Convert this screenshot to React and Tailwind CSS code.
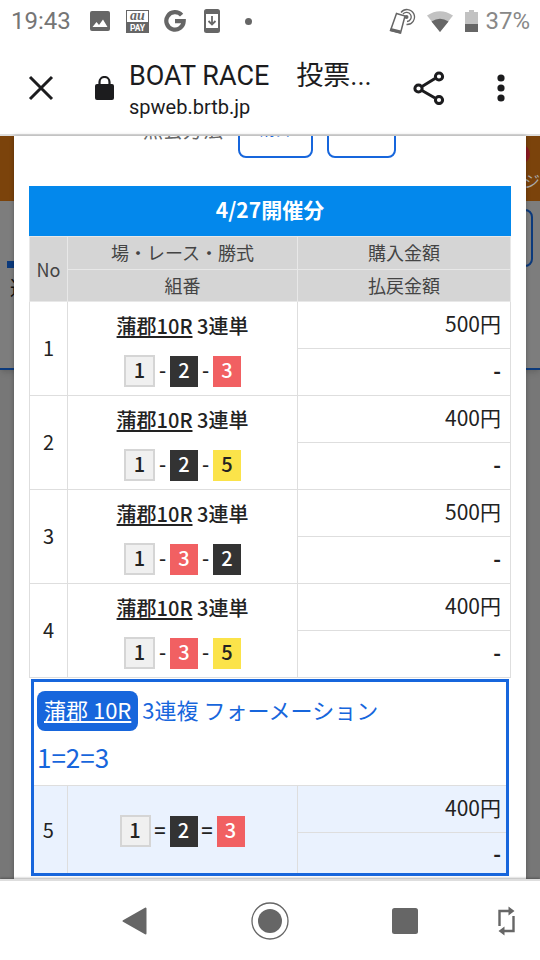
import React from 'react';

const bets = [
    { no: 1, nums: [1, 2, 3], amount: "500円" },
    { no: 2, nums: [1, 2, 5], amount: "400円" },
    { no: 3, nums: [1, 3, 2], amount: "500円" },
    { no: 4, nums: [1, 3, 5], amount: "400円" },
];

const boatColors = {
    1: "w-[31px] h-8 bg-[#f0f0f0] border-2 border-[#d5d5d5] text-[#222]",
    2: "w-7 h-[31px] bg-[#333] text-white",
    3: "w-7 h-[31px] bg-[#f16062] text-white",
    5: "w-7 h-[31px] bg-[#fbe34a] text-[#222]",
};

function Boats({ nums, sep }) {
    return (
        <div className="flex items-center justify-center text-xl leading-8 font-medium">
            {nums.map((n, i) => (
                <React.Fragment key={n}>
                    {i > 0 && <span className={sep === "=" ? "w-[19px] text-center pb-[2px]" : "w-[15px] text-center pb-[2px]"}>{sep}</span>}
                    <span className={`${boatColors[n]} flex items-center justify-center leading-none pb-[2px]`}>{n}</span>
                </React.Fragment>
            ))}
        </div>
    );
}

function StatusBar() {
    return (
        <div className="flex items-center h-[42px] pl-[11px] pr-[10px] text-[#666] font-['Roboto',sans-serif]">
            <span className="text-2xl w-[79px] text-[#757575]">19:43</span>
            <svg width="20" height="20" viewBox="0 0 20 20" className="shrink-0">
                <rect width="20" height="20" rx="2" fill="#666" />
                <path d="M2.500 16l4-5 2.500 3 4-5.500L17.500 16z" fill="#fff" />
            </svg>
            <svg width="23" height="23" viewBox="0 0 23 23" className="shrink-0 ml-4 overflow-visible">
                <rect x="0.5" y="0.5" width="22" height="22" fill="#fff" stroke="#666" />
                <rect y="12" width="23" height="11" fill="#666" />
                <text x="11.5" y="10" textAnchor="middle" fontSize="14" fontStyle="italic" fontWeight="bold" fontFamily="Liberation Serif, serif" fill="#666">au</text>
                <text x="11.5" y="20.5" textAnchor="middle" fontSize="8.5" fontWeight="bold" fontFamily="Roboto, sans-serif" fill="#fff">PAY</text>
            </svg>
            <svg width="22" height="22" viewBox="0 0 22 22" className="shrink-0 ml-[15px]" fill="none" stroke="#666" strokeWidth="4.2">
                <path d="M17.6 5.2A8.700 8.700 0 1 0 19.700 11.200H11" />
            </svg>
            <svg width="16" height="24" viewBox="0 0 16 24" className="shrink-0 ml-[18px]" fill="none" stroke="#666">
                <rect x="1" y="1" width="14" height="22" rx="1.5" strokeWidth="2" />
                <path d="M1 3h14M1 21h14" strokeWidth="4" />
                <path d="M8 7v8M4.5 12L8 15.500l3.500-3.500" strokeWidth="1.800" />
            </svg>
            <span className="w-[7px] h-[7px] rounded-full bg-[#666] ml-[25px]" />
            <svg width="27" height="27" viewBox="0 0 27 27" className="shrink-0 ml-auto" fill="none" stroke="#666">
                <path d="M7.500 5.500L16 8l-4.500 17-10-2.500z" strokeWidth="1.500" />
                <path d="M1.500 21.500l10 2.500" strokeWidth="3" />
                <circle cx="17.500" cy="9" r="2" fill="#666" stroke="none" />
                <path d="M14 6a4.600 4.600 0 1 1 4 7.500M12 4.500a7.500 7.500 0 1 1 5.500 12" strokeWidth="1.300" />
            </svg>
            <svg width="26" height="21" viewBox="0 0 26 21" className="shrink-0 ml-[11px]">
                <path d="M0 4.500Q13-4 26 4.500L13 21z" fill="#c2c2c2" />
                <path d="M4.500 10.500Q13 5 21.500 10.500L13 21z" fill="#666" />
            </svg>
            <svg width="13" height="22" viewBox="0 0 13 22" className="shrink-0 ml-3">
                <path d="M4 0h5v2h4v13H0V2h4z" fill="#c2c2c2" />
                <path d="M0 14h13v8H0z" fill="#666" />
            </svg>
            <span className="text-2xl ml-[7px] text-[#888]">37%</span>
        </div>
    );
}

function BrowserBar() {
    return (
        <header className="flex items-center h-[94px] border-b-2 border-[#dedede] text-[#1c1c1e]">
            <button type="button" aria-label="閉じる" className="ml-7">
                <svg width="26" height="26" viewBox="0 0 26 26" stroke="currentColor" strokeWidth="3">
                    <path d="M2 2l22 22M24 2L2 24" />
                </svg>
            </button>
            <svg width="19" height="25" viewBox="0 0 19 25" className="shrink-0 ml-[41px]">
                <rect y="8" width="19" height="16" rx="2" fill="currentColor" />
                <path d="M4.500 9V6a5 5 0 0 1 10 0v3" fill="none" stroke="currentColor" strokeWidth="2.200" />
            </svg>
            <div className="ml-[15px] pt-[6px] flex-1 min-w-0 font-['Roboto','Noto_Sans_CJK_JP',sans-serif]">
                <h1 className="text-[27px] leading-8 whitespace-nowrap">BOAT RACE　投票...</h1>
                <p className="text-xl leading-[30px]">spweb.brtb.jp</p>
            </div>
            <button type="button" aria-label="共有" className="shrink-0">
                <svg width="32" height="34" viewBox="0 0 32 34" fill="none" stroke="currentColor" strokeWidth="3">
                    <path d="M9 15.500l13-8M9 19.500l13 7.500" />
                    <circle cx="5.500" cy="17.500" r="3.600" />
                    <circle cx="26" cy="5.500" r="3.600" />
                    <circle cx="26" cy="29" r="3.600" />
                </svg>
            </button>
            <button type="button" aria-label="メニュー" className="shrink-0 ml-[52px] mr-[35px]">
                <svg width="8" height="28" viewBox="0 0 8 28" fill="currentColor">
                    <circle cx="4" cy="4" r="3.600" />
                    <circle cx="4" cy="14" r="3.600" />
                    <circle cx="4" cy="24" r="3.600" />
                </svg>
            </button>
        </header>
    );
}

// page that stays dimmed behind the dialog
function DimmedPage() {
    return (
        <div aria-hidden="true" className="col-start-1 row-start-1 bg-[#777] overflow-hidden">
            <div className="h-[65px] bg-[#7b430b] flex flex-col items-end overflow-hidden">
                <span className="w-5 h-5 rounded-full bg-[#8c1a22] mt-2 mr-[10px] shrink-0" />
                <span className="text-base leading-6 text-[#aaa] mt-1">ジ</span>
            </div>
            <div className="h-[169px] bg-[#7d7d7d] border-b-2 border-[#0c3a7c] shadow-md flex justify-between items-start">
                <div className="pl-[7px] pt-[60px]">
                    <div className="w-20 h-[7px] bg-[#0c3a7c]" />
                    <p className="text-xl leading-6 mt-2 text-[#111] pl-[3px]">選</p>
                </div>
                <div className="w-20 h-[58px] mt-2 mr-[7px] rounded-lg border-2 border-[#0c3a7c]" />
            </div>
        </div>
    );
}

function BetRow({ no, nums, amount }) {
    return (
        <>
            <tr className="h-[47px]">
                <td rowSpan={2} className="border border-[#dedede] text-center text-xl pb-[2px]">{no}</td>
                <td rowSpan={2} className="border border-[#dedede] text-center pt-[3px]">
                    <p className="text-xl leading-7 font-medium mb-[14px]">
                        <a href="#race" className="underline underline-offset-2">蒲郡10R</a> 3連単
                    </p>
                    <Boats nums={nums} sep="-" />
                </td>
                <td className="border border-[#dedede] text-right text-[21px] leading-8 pr-[9px] pb-[5px]">{amount}</td>
            </tr>
            <tr className="h-[47px]">
                <td className="border border-[#dedede] text-right text-[21px] leading-8 font-bold pr-[9px] pb-1">-</td>
            </tr>
        </>
    );
}

function NavBar() {
    return (
        <nav className="relative h-[81px] bg-white border-t-2 border-[#dedede] shadow-[0_-1px_2px_rgba(0,0,0,0.3)] flex items-center text-[#666]">
            <div className="flex-1 flex justify-between items-center pl-[122px] pr-[80px]">
                <button type="button" aria-label="戻る">
                    <svg width="25" height="28" viewBox="0 0 25 28" fill="currentColor" stroke="currentColor" strokeWidth="2" strokeLinejoin="round">
                        <path d="M1.500 14L23.500 1.500v25z" />
                    </svg>
                </button>
                <button type="button" aria-label="ホーム">
                    <svg width="38" height="38" viewBox="0 0 38 38">
                        <circle cx="19" cy="19" r="18" fill="none" stroke="currentColor" strokeWidth="1.300" />
                        <circle cx="19" cy="19" r="12" fill="currentColor" />
                    </svg>
                </button>
                <button type="button" aria-label="履歴">
                    <svg width="26" height="26" viewBox="0 0 26 26" fill="currentColor">
                        <rect width="26" height="26" rx="2.500" />
                    </svg>
                </button>
            </div>
            <button type="button" aria-label="画面の回転" className="mr-[25px]">
                <svg width="17" height="30" viewBox="0 0 17 30" fill="none" stroke="currentColor" strokeWidth="2.400">
                    <path d="M1.500 20V5H13M15.500 10v15H4" />
                    <path d="M10.500 0.500V9.500L16.500 5zM6.500 20.500v9L0.500 25z" fill="currentColor" stroke="none" />
                </svg>
            </button>
        </nav>
    );
}

export default function App() {
    return (
        <div className="min-h-screen flex flex-col bg-white text-[#222] font-['Noto_Sans_CJK_JP',sans-serif]">
            <StatusBar />
            <BrowserBar />

            <main className="flex-1 grid grid-cols-1">
                <DimmedPage />

                <div className="col-start-1 row-start-1 relative mx-[14px] bg-white px-[15px] shadow-[0_0_4px_rgba(0,0,0,0.3)]">
                    {/* settlement row, scrolled mostly out of view */}
                    <div className="flex items-end h-[22px] overflow-hidden pl-[114px] text-[#666]">
                        <span className="text-xl leading-6 pb-4 w-[95px] shrink-0">照会方法</span>
                        <button type="button" className="w-[75px] h-14 shrink-0 rounded-lg border-2 border-[#1766dc] text-[#1766dc] text-lg leading-6 pb-[6px]">精算</button>
                        <button type="button" aria-label="選択" className="w-[69px] h-14 shrink-0 ml-[14px] rounded-lg border-2 border-[#1766dc]" />
                    </div>

                    <h2 className="mt-7 h-[50px] pb-[2px] flex items-center justify-center bg-[#0388ec] text-white text-[21px] font-bold">4/27開催分</h2>

                    <table className="w-full table-fixed border-collapse">
                        <colgroup>
                            <col className="w-[38px]" />
                            <col className="w-[230px]" />
                            <col />
                        </colgroup>
                        <thead className="bg-[#d5d5d5] text-[#444] text-lg leading-6">
                            <tr className="h-[33px]">
                                <th rowSpan={2} className="border border-[#e8e8e8] font-normal">No</th>
                                <th className="border border-[#e8e8e8] font-normal pb-[2px]">場・レース・勝式</th>
                                <th className="border border-[#e8e8e8] font-normal pb-[2px]">購入金額</th>
                            </tr>
                            <tr className="h-8">
                                <th className="border border-[#e8e8e8] font-normal pb-[2px]">組番</th>
                                <th className="border border-[#e8e8e8] font-normal pb-[2px]">払戻金額</th>
                            </tr>
                        </thead>
                        <tbody>
                            {bets.map((bet) => (
                                <BetRow key={bet.no} {...bet} />
                            ))}
                        </tbody>
                    </table>

                    <section className="mx-[2px] mt-px mb-px border-[3px] border-[#1766dc]">
                        <div className="h-[103px] pl-[3px] pt-[9px] text-[#1766dc]">
                            <div className="flex items-center gap-1 text-[22px]">
                                <a href="#race" className="h-10 px-[7px] pb-[3px] flex items-center rounded-lg bg-[#1766dc] text-white underline underline-offset-2">蒲郡 10R</a>
                                <span className="pb-1">3連複 フォーメーション</span>
                            </div>
                            <p className="text-[26px] leading-8 mt-[10px]">1=2=3</p>
                        </div>
                        <table className="w-full table-fixed border-collapse bg-[#eaf2fe]">
                            <colgroup>
                                <col className="w-[33px]" />
                                <col className="w-[230px]" />
                                <col />
                            </colgroup>
                            <tbody>
                                <tr className="h-[47px]">
                                    <td rowSpan={2} className="border-t border-r border-[#dedede] text-center text-xl pr-1 pt-[2px]">5</td>
                                    <td rowSpan={2} className="border-t border-r border-[#dedede] pt-1">
                                        <Boats nums={[1, 2, 3]} sep="=" />
                                    </td>
                                    <td className="border-t border-[#dedede] text-right text-[21px] leading-8 pr-[5px] pb-[5px]">400円</td>
                                </tr>
                                <tr className="h-10">
                                    <td className="border-t border-[#dedede] text-right text-[21px] leading-8 font-bold pr-[5px]">-</td>
                                </tr>
                            </tbody>
                        </table>
                    </section>
                </div>
            </main>

            <NavBar />
        </div>
    );
}
